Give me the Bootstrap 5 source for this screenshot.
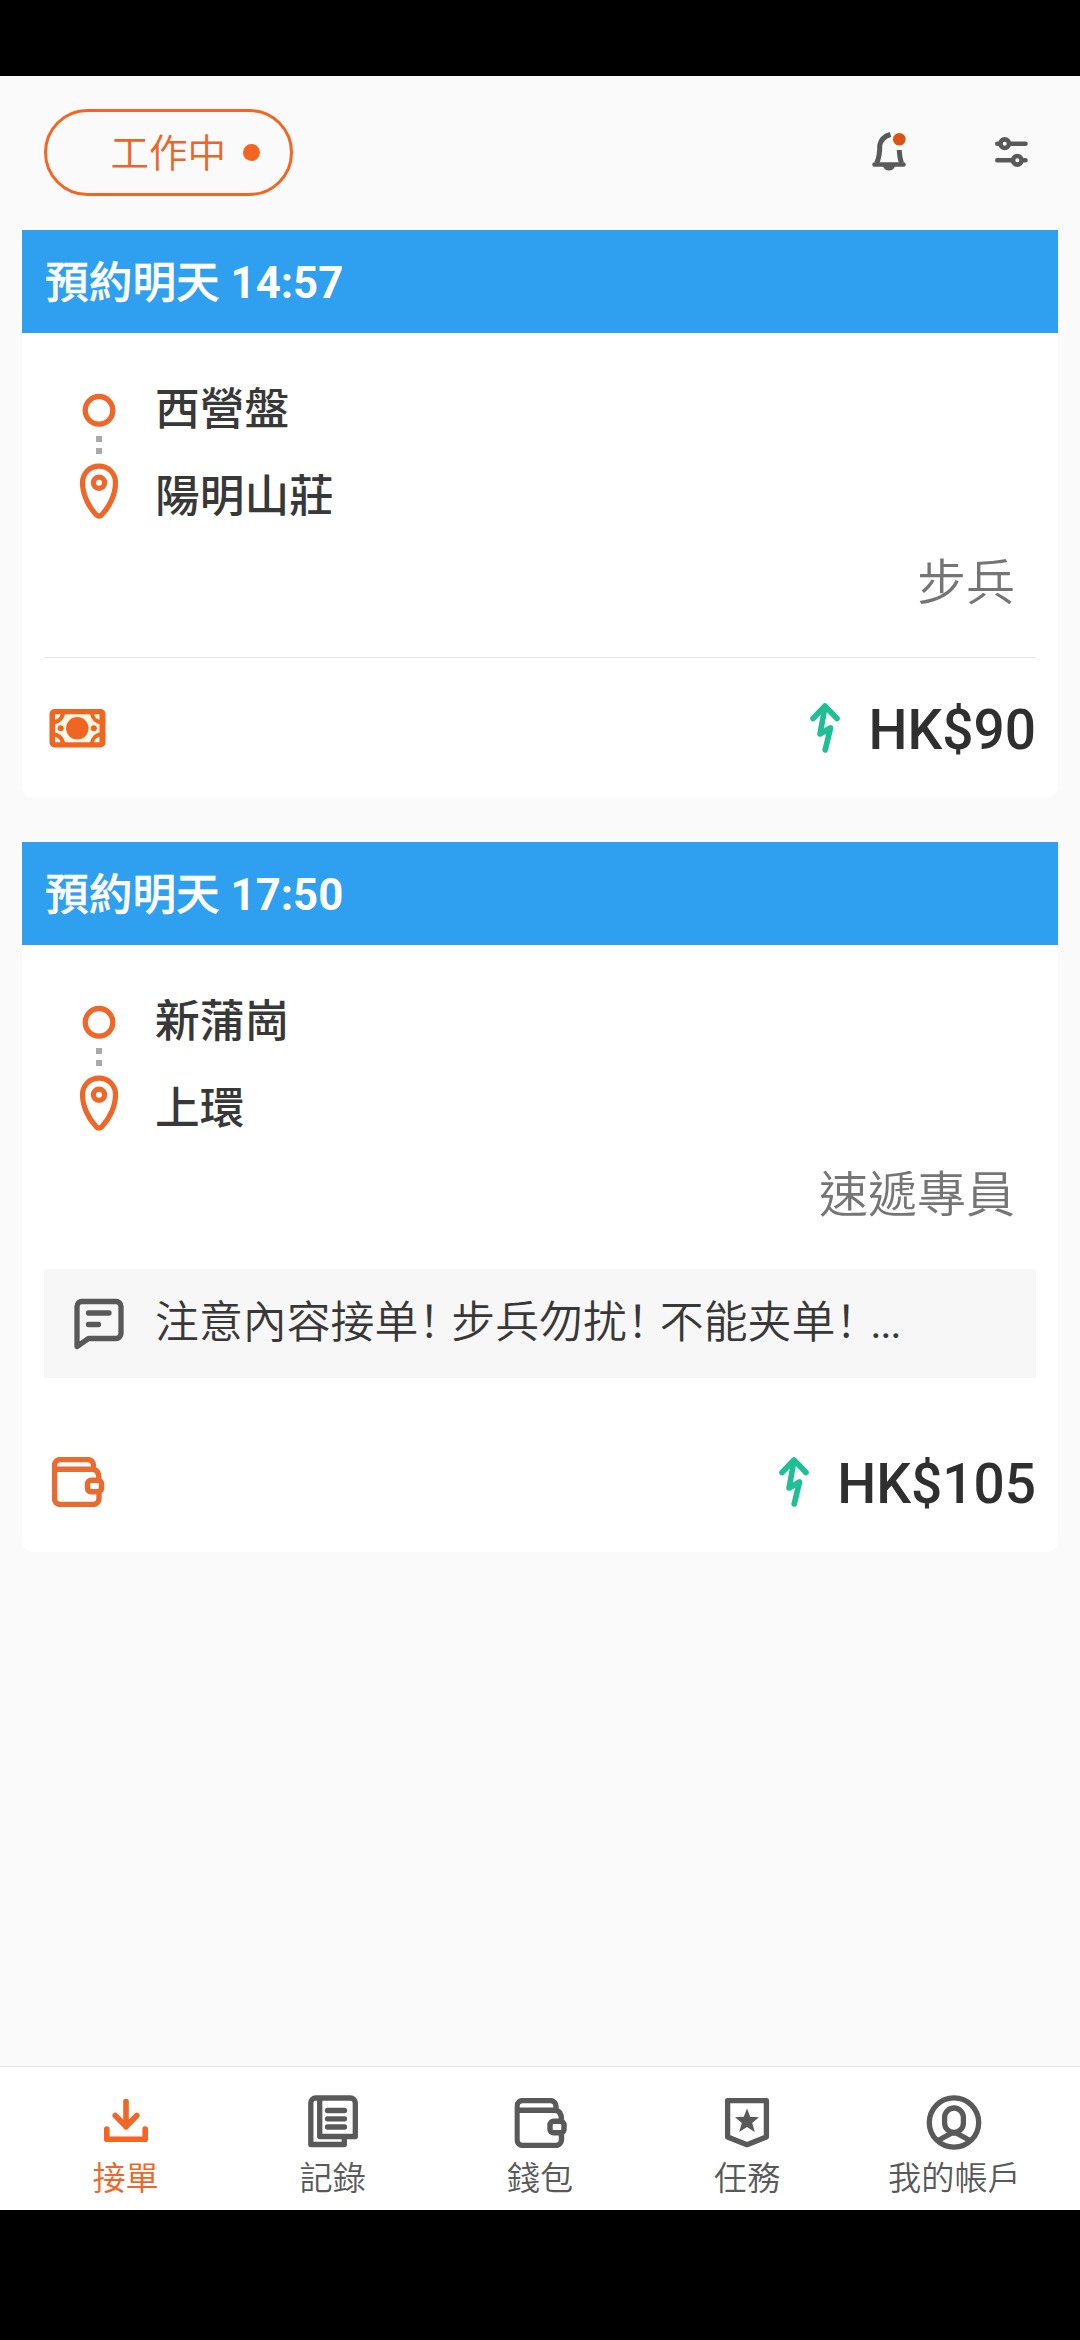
<!DOCTYPE html>
<html lang="zh-Hant-HK">
<head>
<meta charset="utf-8">
<meta name="viewport" content="width=device-width, initial-scale=1">
<title>接單</title>
<link rel="stylesheet" href="https://cdn.jsdelivr.net/npm/bootstrap@5.3.0/dist/css/bootstrap.min.css">
<style>
:root { --brand: #f26522; --ink: #383838; --icon: #595959; }
body { background: #000; color: var(--ink); font-family: Roboto, "Noto Sans CJK TC", sans-serif; }
svg { display: block; flex: none; }
.app-screen { height: 2340px; padding: 76px 0 130px; overflow: hidden; }
.app-view { background: #fafafa; }
.top-bar { height: 154px; padding: 0 44px 2px; }
.status-pill { width: 249px; height: 87px; border: 3px solid var(--brand); color: #ee6426; font-size: 38.5px; padding-right: 30px; font-weight: 350; line-height: 1; }
.status-pill .status-label { padding-top: 5px; }
.status-dot { width: 17px; height: 17px; background: var(--brand); margin-left: 17px; }
.top-icons { gap: 67px; }
.order-list { padding: 0 22px; gap: 44px; }
.order-card { border: 0; border-radius: 0 0 12px 12px; background: #fff; }
.order-card > .order-head { height: 103px; padding: 5px 24px 0 23px; background: #2ea0ef; color: #fff; font-size: 43.7px; font-weight: 700; line-height: 1; border: 0; border-radius: 0; }
.order-head .cjk { font-weight: 500; -webkit-text-stroke: .4px #fff; }
.route { padding: 33px 0 0 57px; gap: 36px; }
.route svg { margin-top: 27px; }
.stop-name { height: 87px; line-height: 89px; font-size: 44.7px; font-weight: 500; white-space: nowrap; }
.order-kind { height: 117px; padding-right: 43px; padding-top: 7px; font-size: 49px; font-weight: 350; line-height: 74px; color: #757575; }
.order-foot { height: 141px; padding: 0 22px; }
.order-rule { height: 1px; margin: 0 22px -1px; background: #e6e6e6; }
.price { font-size: 55px; font-weight: 500; line-height: 1; padding-top: 6px; color: #2f2f2f; }
.price-group { gap: 28px; }
.note-box { height: 109px; margin: 0 22px 33px; padding-left: 29px; gap: 30px; background: #f7f7f7; }
.note-text { font-family: Roboto, "Noto Sans CJK SC", sans-serif; font-size: 43.9px; font-weight: 350; line-height: 1; white-space: nowrap; padding-top: 1px; }
.note-text .bang { letter-spacing: -11px; }
.note-text .dots { letter-spacing: -1.6px; margin-left: 2px; font-weight: 400; }
.tab-bar { height: 144px; border-top: 1px solid #e3e3e3; background: #fff; padding: 0 22px; }
.tab-bar > .tab-item { flex: 1 1 0; min-width: 0; color: #595959; padding: 24px 0 0; font-size: 33.2px; font-weight: 350; line-height: 40px; border-radius: 0; white-space: nowrap; }
.tab-item svg { margin-bottom: 8px; }
.tab-bar > .tab-item.current { color: var(--brand); }
</style>
<script src="https://cdn.jsdelivr.net/npm/bootstrap@5.3.0/dist/js/bootstrap.bundle.min.js"></script>
</head>
<body>
<svg width="0" height="0" class="position-absolute" aria-hidden="true">
  <defs>
    <symbol id="i-route" viewBox="0 0 40 128">
      <circle cx="20" cy="17.300" r="13.800" fill="none" stroke="#ee6628" stroke-width="5.300"/>
      <path d="M17 43h6v6h-6zM17 55h6v6h-6z" fill="#a9a9a9"/>
      <path d="M20 73.200C10.500 73.200 3.500 80.500 3.500 89.500C3.500 102 10 114 16.800 121.300Q20 124.500 23.200 121.300C30 114 36.500 102 36.500 89.500C36.500 80.500 29.500 73.200 20 73.200Z" fill="none" stroke="#ee6628" stroke-width="5.200"/>
      <circle cx="20" cy="89.700" r="5.600" fill="none" stroke="#ee6628" stroke-width="5.200"/>
    </symbol>
    <symbol id="i-surge" viewBox="0 0 30 50">
      <path d="M3 15.500L15 3L27 15.500M15 4L10 31L20.500 25L15.200 47" fill="none" stroke="#1fbf96" stroke-width="5.600" stroke-linecap="round" stroke-linejoin="round"/>
    </symbol>
    <symbol id="i-wallet" viewBox="0 0 54 50">
      <path d="M41.500 12V8.500a6 6 0 0 0-6-6H8.500a6 6 0 0 0-6 6V41.500a6 6 0 0 0 6 6H41a6 6 0 0 0 6-6V35.500M2.500 12.300H41Q47 13 47 22M5 12.300H41" fill="none" stroke="currentColor" stroke-width="5.400"/>
      <rect x="35.500" y="23.300" width="14" height="11.500" rx="3.500" fill="none" stroke="currentColor" stroke-width="5.400"/>
    </symbol>
  </defs>
</svg>

<div class="app-screen d-flex flex-column">
  <div class="app-view flex-grow-1 d-flex flex-column">
    <header class="top-bar d-flex align-items-center justify-content-between flex-shrink-0">
      <div class="status-pill rounded-pill d-flex align-items-center justify-content-end">
        <span class="status-label">工作中</span><span class="status-dot rounded-circle"></span>
      </div>
      <div class="top-icons d-flex align-items-center">
        <svg width="56" height="56" viewBox="0 0 56 56" fill="none" stroke="#595959" stroke-width="5">
          <path d="M26.500 10.500Q17.500 13 15.800 21Q15.800 33 12.600 39M35.300 26Q35.600 34 37.600 39"/>
          <path d="M10.500 40.500H39.500" stroke-width="4.500" stroke-linecap="round"/>
          <path d="M18.500 41H31.500Q30 46.500 25 46.500T18.500 41Z" fill="#595959" stroke="none"/>
          <circle cx="35.300" cy="15.300" r="6.300" fill="#dc5412" stroke="none"/>
        </svg>
        <svg width="49" height="40" viewBox="0 0 49 40" fill="none" stroke="#595959" stroke-width="4.600" stroke-linecap="round">
          <path d="M10.300 11.700H12.500M23.500 11.700H38.500M10.300 28.300H25.500M36.500 28.300H38.500"/>
          <circle cx="17.700" cy="11.700" r="4.300"/><circle cx="30.300" cy="28.300" r="4.300"/>
        </svg>
      </div>
    </header>

    <main class="order-list flex-grow-1 d-flex flex-column">
      <article class="card order-card">
        <div class="card-header order-head d-flex align-items-center"><span><span class="cjk">預約明天</span> 14:57</span></div>
        <div class="route d-flex">
          <svg width="40" height="128"><use href="#i-route"/></svg>
          <div><div class="stop-name">西營盤</div><div class="stop-name">陽明山莊</div></div>
        </div>
        <div class="order-kind text-end">步兵</div>
        <div class="order-rule"></div>
        <div class="order-foot d-flex align-items-center justify-content-between">
          <svg width="62" height="40" viewBox="0 0 62 40">
            <rect x="5.500" y="1" width="56" height="38.500" rx="5" fill="#f0651f"/>
            <path d="M11 6.200h5.500q-.8 4.500-5.500 5.600zM55.500 6.200h-5.500q.8 4.500 5.500 5.600zM11 34.300h5.500q-.8-4.500-5.500-5.600zM55.500 34.300h-5.500q.8-4.500 5.500-5.600zM21 6.200H46Q48 14 55.500 16.200V24.300Q48 26.500 46 34.300H21Q19 26.500 11 24.300V16.200Q19 14 21 6.200Z" fill="#fff8e8"/>
            <circle cx="33.300" cy="20.300" r="11.200" fill="#f0651f"/><circle cx="16.700" cy="20.300" r="3" fill="#f0651f"/><circle cx="49.800" cy="20.300" r="3" fill="#f0651f"/>
          </svg>
          <div class="price-group d-flex align-items-center"><svg width="30" height="50"><use href="#i-surge"/></svg><span class="price">HK$90</span></div>
        </div>
      </article>

      <article class="card order-card">
        <div class="card-header order-head d-flex align-items-center"><span><span class="cjk">預約明天</span> 17:50</span></div>
        <div class="route d-flex">
          <svg width="40" height="128"><use href="#i-route"/></svg>
          <div><div class="stop-name">新蒲崗</div><div class="stop-name">上環</div></div>
        </div>
        <div class="order-kind text-end">速遞專員</div>
        <div class="note-box d-flex align-items-center">
          <svg width="52" height="52" viewBox="0 0 52 52" fill="none" stroke="#595959" stroke-width="5.300" stroke-linecap="round" stroke-linejoin="round">
            <path d="M4 48.500V8.500a5 5 0 0 1 5-5H43a5 5 0 0 1 5 5V35.500a5 5 0 0 1-5 5H15.500L4 48.500ZM15.500 15H36M15.500 26.500H25.500"/>
          </svg>
          <div class="note-text" lang="zh-Hans">注意內容接单<span class="bang">！</span>步兵勿扰<span class="bang">！</span>不能夹单<span class="bang">！</span><span class="dots">...</span></div>
        </div>
        <div class="order-foot d-flex align-items-center justify-content-between">
          <svg width="62" height="50" viewBox="-8 0 62 50" color="#ea6a30"><use href="#i-wallet" width="54" height="50"/></svg>
          <div class="price-group d-flex align-items-center"><svg width="30" height="50"><use href="#i-surge"/></svg><span class="price">HK$105</span></div>
        </div>
      </article>
    </main>

    <nav class="tab-bar nav flex-nowrap flex-shrink-0">
      <a class="tab-item nav-link current d-flex flex-column align-items-center" href="#">
        <svg width="60" height="60" viewBox="0 0 60 60" fill="none" stroke="currentColor" stroke-width="5.600" stroke-linecap="round" stroke-linejoin="round"><path d="M10.800 38V48.300H49.200V38M30 10.500V36M19.200 24.500L30 35.500L40.800 24.500"/></svg>
        <span>接單</span>
      </a>
      <a class="tab-item nav-link d-flex flex-column align-items-center" href="#">
        <svg width="60" height="60" viewBox="0 0 60 60" fill="none" stroke="currentColor" stroke-width="5.300" stroke-linecap="round" stroke-linejoin="round"><path d="M16.700 45.500H52.300V12a5 5 0 0 0-5-5H12.800a5 5 0 0 0-5 5V53.500H41.300V46.500M16.700 45.500V8"/><path d="M24.500 19.500H41.500M24.500 27.800H41.500M24.500 36H41.500"/></svg>
        <span>記錄</span>
      </a>
      <a class="tab-item nav-link d-flex flex-column align-items-center" href="#">
        <svg width="60" height="60" viewBox="-4.500 -7 60 60"><use href="#i-wallet" width="54" height="50"/></svg>
        <span>錢包</span>
      </a>
      <a class="tab-item nav-link d-flex flex-column align-items-center" href="#">
        <svg width="60" height="60" viewBox="0 0 60 60"><path d="M10.600 9.700H49.400V46L30 53.700L10.600 46Z" fill="none" stroke="currentColor" stroke-width="5.300" stroke-linejoin="round"/><path d="M30 17.500L33.200 25.800L42 26.300L35.200 31.900L37.800 41L30 36L22.200 41L24.800 31.900L18 26.300L26.800 25.800Z" fill="currentColor"/></svg>
        <span>任務</span>
      </a>
      <a class="tab-item nav-link d-flex flex-column align-items-center" href="#">
        <svg width="60" height="60" viewBox="0 0 60 60" fill="none" stroke="currentColor" stroke-width="5.300"><circle cx="30" cy="31.500" r="24.700"/><rect x="20.600" y="17" width="18.800" height="24.500" rx="9.400"/><path d="M14 49.500L28 42H32L46 49.500"/></svg>
        <span>我的帳戶</span>
      </a>
    </nav>
  </div>
</div>
</body>
</html>
